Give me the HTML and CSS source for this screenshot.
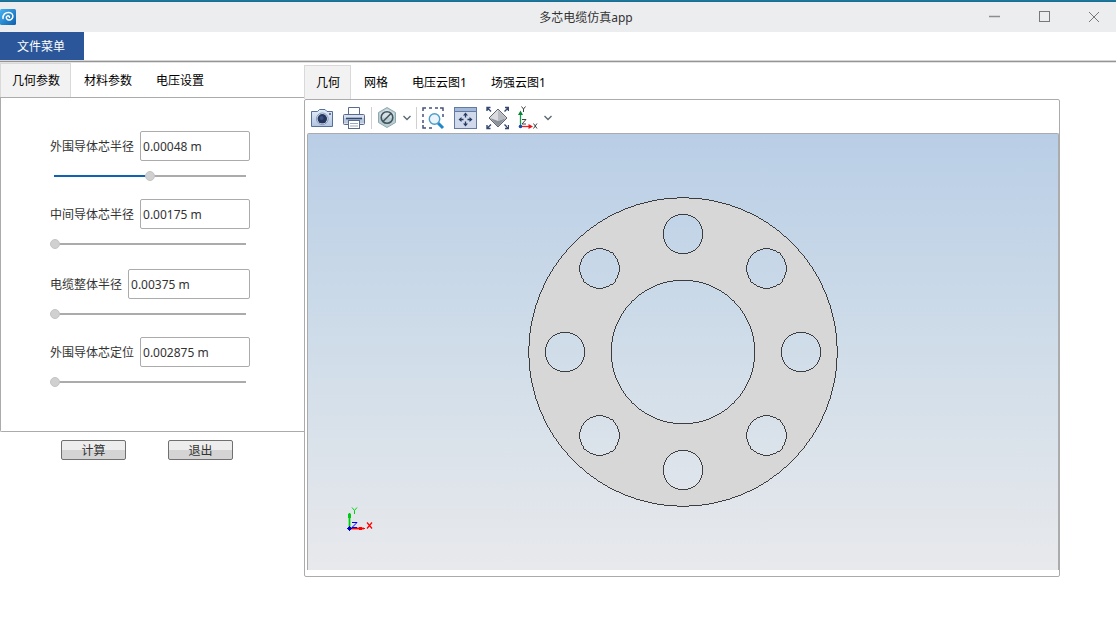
FILE: index.html
```html
<!DOCTYPE html>
<html lang="zh-CN">
<head>
<meta charset="utf-8">
<title>多芯电缆仿真app</title>
<link rel="stylesheet" href="styles.css">
</head>
<body>
<div class="app">
  <header class="titlebar">
    <svg class="logo" viewBox="0 0 16 16" aria-hidden="true">
      <defs><linearGradient id="logo-fill" x1="0" y1="0" x2="1" y2="1"><stop offset="0" stop-color="#45b4f2"/><stop offset="1" stop-color="#0e5fae"/></linearGradient></defs>
      <rect width="16" height="16" rx="1.5" fill="url(#logo-fill)"/>
      <path d="M3 9.500C2.600 5.500 5.600 3.200 8.800 3.400C11.600 3.600 13.300 5.600 12.800 8C12.300 10.400 9.800 11.600 7.800 10.800C5.900 10 5.800 7.600 7.500 6.900C8.600 6.500 9.700 7.200 9.400 8.300" fill="none" stroke="#fff" stroke-width="1.500" stroke-linecap="round"/>
    </svg>
    <h1 class="title">多芯电缆仿真app</h1>
    <div class="window-controls">
      <button class="window-button" type="button" aria-label="最小化"><svg viewBox="0 0 12 12"><path d="M1 5.5H12" stroke="#8c8d8f" stroke-width="1.5"/></svg></button>
      <button class="window-button" type="button" aria-label="最大化"><svg viewBox="0 0 12 12"><rect x="1.5" y=".5" width="10" height="10" fill="none" stroke="#77787a"/></svg></button>
      <button class="window-button window-close" type="button" aria-label="关闭"><svg viewBox="0 0 12 12"><path d="M1 1L11 11M11 1L1 11" stroke="#77787a"/></svg></button>
    </div>
  </header>

  <nav class="menubar"><button class="menu-button" type="button">文件菜单</button></nav>

  <main class="workspace">
    <section class="sidebar">
      <div class="tabs" role="tablist">
        <button class="tab tab-active" type="button" role="tab" aria-selected="true">几何参数</button>
        <button class="tab" type="button" role="tab">材料参数</button>
        <button class="tab" type="button" role="tab">电压设置</button>
      </div>
      <form class="params">
        <div class="param-group">
          <div class="param">
            <div class="field"><label class="label" for="outer-core">外围导体芯半径</label><input class="value" id="outer-core" type="text" value="0.00048 m"></div>
            <input class="slider" type="range" min="0" max="100" value="50" style="--fill: 50%" aria-label="外围导体芯半径">
          </div>
          <div class="param">
            <div class="field"><label class="label" for="middle-core">中间导体芯半径</label><input class="value" id="middle-core" type="text" value="0.00175 m"></div>
            <input class="slider" type="range" min="0" max="100" value="0" style="--fill: 0%" aria-label="中间导体芯半径">
          </div>
        </div>
        <div class="param-group">
          <div class="param">
            <div class="field"><label class="label" for="cable-radius">电缆整体半径</label><input class="value" id="cable-radius" type="text" value="0.00375 m"></div>
            <input class="slider" type="range" min="0" max="100" value="0" style="--fill: 0%" aria-label="电缆整体半径">
          </div>
          <div class="param">
            <div class="field"><label class="label" for="core-position">外围导体芯定位</label><input class="value" id="core-position" type="text" value="0.002875 m"></div>
            <input class="slider" type="range" min="0" max="100" value="0" style="--fill: 0%" aria-label="外围导体芯定位">
          </div>
        </div>
      </form>
      <div class="actions">
        <button class="action" type="button">计算</button>
        <button class="action" type="button">退出</button>
      </div>
    </section>

    <section class="viewer">
      <div class="tabs" role="tablist">
        <button class="tab tab-active" type="button" role="tab" aria-selected="true">几何</button>
        <button class="tab" type="button" role="tab">网格</button>
        <button class="tab" type="button" role="tab">电压云图1</button>
        <button class="tab" type="button" role="tab">场强云图1</button>
      </div>
      <div class="panel">
        <div class="toolbar" role="toolbar">
          <button class="tool" type="button" aria-label="截图">
            <svg viewBox="0 0 24 24">
              <defs><linearGradient id="camera-fill" x1="0" y1="0" x2="0" y2="1"><stop offset="0" stop-color="#e4eefb"/><stop offset="1" stop-color="#b2c4e0"/></linearGradient></defs>
              <path d="M1.5 5.5H7.5L9.5 3.5H15L17 5.5H22.5V20.5H1.5Z" fill="url(#camera-fill)" stroke="#566f9a"/>
              <circle cx="12.3" cy="12.8" r="5.8" fill="#f4f8fd" stroke="#6c83aa" stroke-width=".8"/><circle cx="12.3" cy="12.8" r="4.8" fill="#25365f"/><circle cx="11.6" cy="12" r="2" fill="#3d5382"/><circle cx="20" cy="8" r=".9" fill="#34466f"/>
            </svg>
          </button>
          <button class="tool" type="button" aria-label="打印">
            <svg viewBox="0 0 24 24">
              <path d="M6.5 9V1.5H17.5V9" fill="#fff" stroke="#596a8d"/>
              <rect x="1.500" y="8.500" width="21" height="10" rx="1" fill="#d5dfee" stroke="#596a8d"/>
              <path d="M2 12H22V17H2Z" fill="#b9c8df"/><path d="M4 12.500H20" stroke="#32486f" stroke-width="1.600"/>
              <rect x="6.500" y="14.500" width="11" height="8" fill="#fff" stroke="#596a8d"/><path d="M8 17.500H16M8 20H16" stroke="#9aa8c0"/>
            </svg>
          </button>
          <span class="separator"></span>
          <button class="tool tool-menu" type="button" aria-label="剪裁">
            <svg viewBox="0 0 24 24"><path d="M12 1.500L20.500 6.500V16.500L12 21.500L3.500 16.500V6.500Z" fill="#b9ced3" stroke="#8fa8af"/><path d="M12 3L19 7.200V11.500H5V7.200Z" fill="#d5e2e5"/><circle cx="12" cy="11.500" r="5.800" fill="none" stroke="#44545e" stroke-width="1.600"/><path d="M8 15.500L16 7.500" stroke="#44545e" stroke-width="1.600"/></svg>
          </button>
          <button class="chevron" type="button" aria-label="剪裁选项"><svg viewBox="0 0 10 10"><path d="M1.500 3L5 6.500L8.500 3" fill="none" stroke="#5b6a75" stroke-width="1.400"/></svg></button>
          <span class="separator separator-wide"></span>
          <button class="tool" type="button" aria-label="缩放框">
            <svg viewBox="0 0 24 24"><path d="M2 5V2H5M8 2H11M14 2H17M19 2H22V5M2 8V11M2 14V17M2 19V22H5M8 22H11M22 8V11" fill="none" stroke="#44527c" stroke-width="1.500"/><path d="M17 17L22 22" stroke="#1e88c9" stroke-width="3"/><circle cx="13.500" cy="13" r="5.200" fill="#e9f5fb" stroke="#4d9cc8" stroke-width="1.400"/></svg>
          </button>
          <button class="tool" type="button" aria-label="缩放到窗口大小">
            <svg viewBox="0 0 24 24"><rect x="1.500" y="1.500" width="22" height="21" fill="#d0daea" stroke="#637aa4"/><path d="M2 2H23V5H2Z" fill="#a4b8d8"/><path d="M2 5.500H23" stroke="#637aa4"/><path d="M12.500 8V11.500M12.500 15.500V19M7 13.500H10.500M14.500 13.500H18" stroke="#263b63" stroke-width="1.300"/><path d="M12.500 6.500L15 9.500H10ZM12.500 20.500L15 17.500H10ZM5.500 13.500L8.500 11V16ZM19.500 13.500L16.500 11V16Z" fill="#263b63"/></svg>
          </button>
          <button class="tool" type="button" aria-label="缩放到选择">
            <svg viewBox="0 0 24 24"><path d="M13 3L22 12L13 21L4 12Z" fill="#d9dbde" stroke="#60656e"/><path d="M5 12L13 15L21 12L13 20.500Z" fill="#8b9199"/><path d="M13 3.700V15L21 12Z" fill="#b7bbc0"/><path d="M2 5V1.500H5.500M2 1.500L6 5.500M20 1.500H23.500V5M23.500 1.500L19.500 5.500M2 19V22.500H5.500M2 22.500L6 18.500M20 22.500H23.500V19M23.500 22.500L19.500 18.500" fill="none" stroke="#35496f" stroke-width="1.400"/></svg>
          </button>
          <button class="tool tool-menu" type="button" aria-label="视图方向">
            <svg viewBox="0 0 24 24"><path d="M4.500 20V8" stroke="#19984b" stroke-width="1.300"/><path d="M4.500 4.500L7 9H2Z" fill="#078438"/><path d="M5 20.500H14" stroke="#ef2525" stroke-width="1.300"/><path d="M17 20.500L12.500 18V23Z" fill="#e91515"/><circle cx="4.500" cy="20.500" r="1.800" fill="#1a49a8"/><path d="M5.500 .5L7.500 3L9.500 .5M7.500 3V6M6 13.500H10L6 18H10M17.500 17.500L21 22.500M21 17.500L17.500 22.500" fill="none" stroke="#444"/></svg>
          </button>
          <button class="chevron" type="button" aria-label="视图选项"><svg viewBox="0 0 10 10"><path d="M1.500 3L5 6.500L8.500 3" fill="none" stroke="#5b6a75" stroke-width="1.400"/></svg></button>
        </div>
        <div class="canvas">
          <svg class="cable" viewBox="-156 -156 312 312" role="img" aria-label="电缆截面">
            <path fill="#d7d7d7" fill-rule="evenodd" d="M-154.300 0a154.300 154.300 0 1 0 308.600 0a154.300 154.300 0 1 0 -308.600 0ZM-71.800 0a71.800 71.800 0 1 0 143.600 0a71.800 71.800 0 1 0 -143.600 0ZM-19.800 -118a19.800 19.800 0 1 0 39.600 0a19.800 19.800 0 1 0 -39.600 0ZM-19.800 118a19.800 19.800 0 1 0 39.600 0a19.800 19.800 0 1 0 -39.600 0ZM-137.800 0a19.800 19.800 0 1 0 39.600 0a19.800 19.800 0 1 0 -39.600 0ZM98.200 0a19.800 19.800 0 1 0 39.600 0a19.800 19.800 0 1 0 -39.600 0ZM-103.300 -83.500a19.800 19.800 0 1 0 39.600 0a19.800 19.800 0 1 0 -39.600 0ZM63.700 -83.500a19.800 19.800 0 1 0 39.600 0a19.800 19.800 0 1 0 -39.600 0ZM-103.300 83.500a19.800 19.800 0 1 0 39.600 0a19.800 19.800 0 1 0 -39.600 0ZM63.700 83.500a19.800 19.800 0 1 0 39.600 0a19.800 19.800 0 1 0 -39.600 0Z" stroke="#151515" stroke-width=".8" shape-rendering="crispEdges"/>
          </svg>
          <svg class="triad" viewBox="0 0 30 30" aria-hidden="true">
            <path d="M4.500 23V8" stroke="#7fe98a" stroke-width="3"/><path d="M6 23.500H19" stroke="#f28b8b" stroke-width="3"/>
            <path d="M4.500 23V8" stroke="#00c814"/><path d="M3 9H6V13H3Z" fill="#00c814"/>
            <path d="M6 23.500H20" stroke="#f00"/><path d="M14 22H17V25H14Z" fill="#f00"/>
            <path d="M2 23.500H7M4.500 21V26" stroke="#00c"/><path d="M3 22H6V25H3Z" fill="#00c"/>
            <path d="M7 2.500L9.500 5.500L12 2.500M9.500 5.500V9" fill="none" stroke="#00d414"/>
            <path d="M7 17.500H12L7 22.500H12" fill="none" stroke="#0000e8"/>
            <path d="M22 17.500L27 23.500M27 17.500L22 23.500" stroke="#f00" stroke-width="1.200"/>
          </svg>
        </div>
      </div>
    </section>
  </main>
</div>
</body>
</html>
```
FILE: styles.css
```css
* { box-sizing: border-box; }

body {
  margin: 0;
  background: #fff;
  color: #333;
  font-family: "Noto Sans", "Noto Sans CJK SC", sans-serif;
  font-size: 12px;
  line-height: 18px;
}

button, input {
  margin: 0;
  padding: 0;
  border: 0;
  border-radius: 0;
  background: none;
  color: inherit;
  font: inherit;
}

svg { display: block; }

.app {
  display: flex;
  flex-direction: column;
  min-height: 100vh;
  border-top: 1px solid #078391;
}

.titlebar {
  display: grid;
  grid-template-columns: 1fr auto 1fr;
  align-items: center;
  height: 31px;
  border-top: 1px solid #2d629c;
  background: #ecedef;
}

.logo { width: 16px; height: 16px; }

.title {
  margin: 0;
  padding: 2px 0 0 56px;
  font-size: 12px;
  font-weight: 400;
}

.window-controls {
  display: flex;
  justify-content: flex-end;
}

.window-button {
  display: grid;
  place-items: center;
  width: 50px;
  height: 30px;
}

.window-close {
  width: 44px;
  margin-left: 3px;
}

.window-button svg { width: 12px; height: 12px; }

.menubar {
  height: 31px;
  border-bottom: 1px solid #e3e3e3;
  background: linear-gradient(#fff 28px, #d6d6d6 28px 29px, #959595 29px);
}

.menu-button {
  height: 28px;
  padding: 2px 19px 0 17px;
  background: #2b579a;
  color: #fff;
}

.workspace {
  display: flex;
  flex: 1;
  padding-right: 56px;
}

.sidebar {
  display: flex;
  flex-direction: column;
  width: 304px;
}

.tabs { display: flex; }

.tab {
  height: 34px;
  padding: 1px 12px 0;
  border: 0 solid #d9d9d9;
  border-top: 1px solid transparent;
  color: #000;
}

.tab-active {
  padding: 1px 11px 0;
  border-width: 1px 1px 0 1px;
  border-color: #d9d9d9;
  margin-right: 1px;
  margin-left: -1px;
  padding-left: 12px;
  padding-right: 10px;
  background: #f2f2f2;
}

.tab-active { margin-left: 0; padding-left: 11px; }

.params {
  display: flex;
  flex-direction: column;
  gap: 10px;
  padding: 33px 54px 34px 49px;
  border: 1px solid #ababab;
  border-right: 0;
  border-bottom-left-radius: 2px;
}

.param-group {
  display: flex;
  flex-direction: column;
  gap: 8px;
}

.field {
  display: flex;
  align-items: center;
  gap: 6px;
}

.label { padding-top: 2px; }

.value {
  flex: 1;
  min-width: 0;
  height: 30px;
  padding: 0 2px;
  border: 1px solid #ababab;
  border-radius: 2px;
  background: #fff;
}

.slider {
  display: block;
  width: 100%;
  height: 30px;
  appearance: none;
}

.slider::-webkit-slider-runnable-track {
  height: 10px;
  background:
    linear-gradient(#0f63b4, #0f63b4) 4px 4px / calc(var(--fill) - 4px) 2px no-repeat,
    linear-gradient(#ababab, #ababab) 4px 4px / calc(100% - 8px) 2px no-repeat;
}

.slider::-webkit-slider-thumb {
  width: 10px;
  height: 10px;
  border: 1px solid #c4c4c4;
  border-radius: 50%;
  background: #d0d0d0;
  appearance: none;
}

.actions {
  display: flex;
  gap: 42px;
  padding: 8px 0 0 61px;
}

.action {
  width: 65px;
  height: 20px;
  padding-top: 1px;
  border: 1px solid #707070;
  border-radius: 2px;
  background: linear-gradient(#ededed 50%, #d4d4d4 50%);
}

.viewer {
  display: flex;
  flex: 1;
  flex-direction: column;
  padding: 2px 0 45px;
}

.panel {
  display: flex;
  flex: 1;
  flex-direction: column;
  padding: 0 0 6px 2px;
  border: 1px solid #ababab;
  border-radius: 2px;
}

.toolbar {
  display: flex;
  align-items: center;
  height: 33px;
  padding-top: 3px;
  margin-left: -1px;
}

.tool {
  display: grid;
  place-items: center;
  width: 32px;
  height: 28px;
}

.tool svg { width: 24px; height: 24px; }
.tool-menu { width: 30px; }

.chevron { width: 10px; }
.chevron svg { width: 10px; height: 10px; }

.separator {
  width: 1px;
  height: 22px;
  margin-left: 1px;
  background: #d0d0d0;
}

.separator-wide { margin-left: 4px; }

.canvas {
  position: relative;
  display: grid;
  flex: 1;
  place-items: center;
  border: 1px solid #ababab;
  border-bottom: 0;
  border-radius: 2px 2px 0 0;
  background: linear-gradient(#b9cee6, #d0dde9 50%, #e8e9ec);
}

.cable { width: 312px; height: 312px; }

.triad {
  position: absolute;
  bottom: 35px;
  left: 37px;
  width: 30px;
  height: 30px;
}
```
